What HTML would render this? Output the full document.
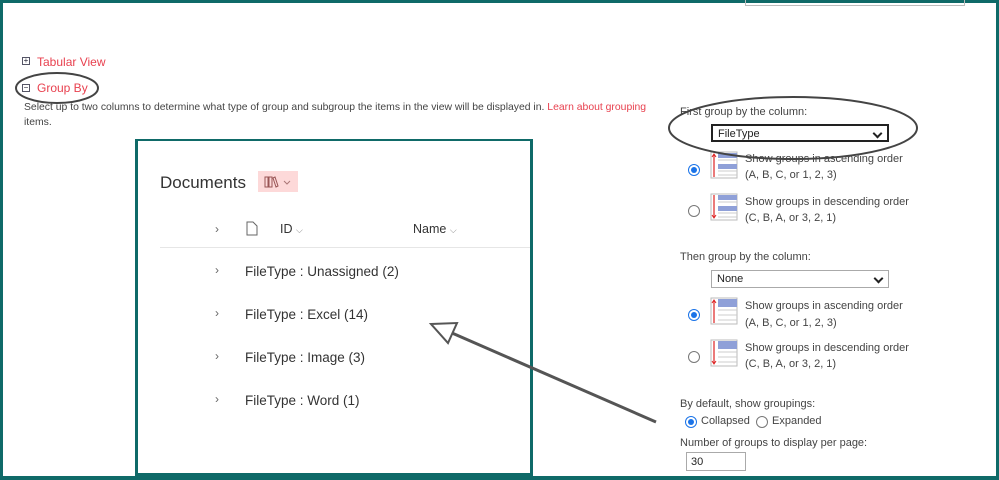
<!DOCTYPE html>
<html><head><meta charset="utf-8"><style>
*{margin:0;padding:0;box-sizing:border-box}
body{width:999px;height:480px;position:relative;overflow:hidden;background:#fff;font-family:"Liberation Sans",sans-serif;color:#444}
.a{position:absolute;white-space:nowrap}
.red{color:#e8414f}
.s{font-size:11px;color:#444}
.rad{position:absolute;width:12px;height:12px;border-radius:50%;border:1px solid #777;background:#fff}
.rad.on{border:1px solid #1a73e8}
.rad.on::after{content:"";position:absolute;left:2px;top:2px;width:6px;height:6px;border-radius:50%;background:#1a73e8}
.sel{position:absolute;height:18px;border:1px solid #aaa;font-size:11px;padding:2px 5px;color:#222}
.sel::after{content:"";position:absolute;right:6px;top:4px;width:5px;height:5px;border-right:2px solid #222;border-bottom:2px solid #222;transform:rotate(45deg)}
.g{position:absolute;left:245px;font-size:13.5px;color:#333}
.ch{position:absolute;left:215px;font-size:12px;color:#666}
</style></head><body>
<div style="position:absolute;left:0;top:0;width:999px;height:480px;border:3px solid #0f6a68;border-bottom-width:4px"></div>
<div style="position:absolute;left:745px;top:0;width:220px;height:6px;border:1px solid #bbb;border-top:none"></div>

<div class="a" style="left:22px;top:57px;width:8px;height:8px;border:1px solid #556;font-size:8px;line-height:6px;text-align:center;color:#223">+</div>
<div class="a red" style="left:37px;top:55px;font-size:12px">Tabular View</div>
<div class="a" style="left:22px;top:84px;width:8px;height:8px;border:1px solid #556;font-size:8px;line-height:6px;text-align:center;color:#223">−</div>
<div class="a red" style="left:37px;top:81px;font-size:12px">Group By</div>
<div class="a s" style="left:24px;top:102px;font-size:10.4px">Select up to two columns to determine what type of group and subgroup the items in the view will be displayed in. <span class="red">Learn about grouping</span></div>
<div class="a s red" style="left:24px;top:117px;font-size:10.4px">items.</div>

<div style="position:absolute;left:135px;top:139px;width:398px;height:337px;border:3px solid #0f6a68;border-top-width:2px"></div>
<div class="a" style="left:160px;top:173px;font-size:17px;color:#333">Documents</div>
<div style="position:absolute;left:258px;top:171px;width:40px;height:21px;background:#fdd9d9"></div>
<svg class="a" style="left:264px;top:175px" width="30" height="14"><path d="M1 2v10h3V2zM5 2v10h3V2zM9 3l3 9 2-1-3-9z" fill="none" stroke="#955" stroke-width="1"/><path d="M20 6l3 3 3-3" fill="none" stroke="#a77"/></svg>
<div class="a" style="left:215px;top:222px;font-size:12px;color:#666">›</div>
<svg class="a" style="left:246px;top:221px" width="12" height="15"><path d="M1 1h6l4 4v9H1z" fill="none" stroke="#666"/></svg>
<div class="a" style="left:280px;top:222px;font-size:12.5px;color:#333">ID <span style="font-size:9px;color:#888">⌵</span></div>
<div class="a" style="left:413px;top:222px;font-size:12.5px;color:#333">Name <span style="font-size:9px;color:#888">⌵</span></div>
<div style="position:absolute;left:160px;top:247px;width:370px;height:1px;background:#e6e6e6"></div>
<div class="ch" style="top:263px">›</div><div class="g" style="top:264px">FileType : Unassigned (2)</div>
<div class="ch" style="top:306px">›</div><div class="g" style="top:307px">FileType : Excel (14)</div>
<div class="ch" style="top:349px">›</div><div class="g" style="top:350px">FileType : Image (3)</div>
<div class="ch" style="top:392px">›</div><div class="g" style="top:393px">FileType : Word (1)</div>

<div class="a s" style="left:680px;top:106px">First group by the column:</div>
<div class="sel" style="left:711px;top:124px;width:178px;border:2px solid #222">FileType</div>
<div class="rad on" style="left:688px;top:164px"></div>
<svg class="a" style="left:710px;top:151px" width="28" height="28"><rect x="1" y="1" width="26" height="26" fill="#fff" stroke="#bbb"/><rect x="8" y="2" width="19" height="5" fill="#8fa0d8"/><rect x="8" y="13" width="19" height="5" fill="#8fa0d8"/><path d="M8 9h19M8 20h19M8 24h19" stroke="#ccc"/><path d="M4 4v22" stroke="#d22" stroke-width="1.2"/><path d="M2 6l2-3 2 3" fill="none" stroke="#d22"/></svg>
<div class="a s" style="left:745px;top:153px">Show groups in ascending order</div>
<div class="a s" style="left:745px;top:169px">(A, B, C, or 1, 2, 3)</div>
<div class="rad" style="left:688px;top:205px"></div>
<svg class="a" style="left:710px;top:193px" width="28" height="28"><rect x="1" y="1" width="26" height="26" fill="#fff" stroke="#bbb"/><rect x="8" y="2" width="19" height="5" fill="#8fa0d8"/><rect x="8" y="13" width="19" height="5" fill="#8fa0d8"/><path d="M8 9h19M8 20h19M8 24h19" stroke="#ccc"/><path d="M4 2v22" stroke="#d22" stroke-width="1.2"/><path d="M2 22l2 3 2-3" fill="none" stroke="#d22"/></svg>
<div class="a s" style="left:745px;top:196px">Show groups in descending order</div>
<div class="a s" style="left:745px;top:212px">(C, B, A, or 3, 2, 1)</div>

<div class="a s" style="left:680px;top:251px">Then group by the column:</div>
<div class="sel" style="left:711px;top:270px;width:178px">None</div>
<div class="rad on" style="left:688px;top:309px"></div>
<svg class="a" style="left:710px;top:297px" width="28" height="28"><rect x="1" y="1" width="26" height="26" fill="#fff" stroke="#bbb"/><rect x="8" y="2" width="19" height="5" fill="#8fa0d8"/><rect x="8" y="5" width="19" height="5" fill="#8fa0d8"/><path d="M8 13h19M8 18h19M8 23h19" stroke="#ccc"/><path d="M4 4v22" stroke="#d22" stroke-width="1.2"/><path d="M2 6l2-3 2 3" fill="none" stroke="#d22"/></svg>
<div class="a s" style="left:745px;top:300px">Show groups in ascending order</div>
<div class="a s" style="left:745px;top:317px">(A, B, C, or 1, 2, 3)</div>
<div class="rad" style="left:688px;top:351px"></div>
<svg class="a" style="left:710px;top:339px" width="28" height="28"><rect x="1" y="1" width="26" height="26" fill="#fff" stroke="#bbb"/><rect x="8" y="2" width="19" height="5" fill="#8fa0d8"/><rect x="8" y="5" width="19" height="5" fill="#8fa0d8"/><path d="M8 13h19M8 18h19M8 23h19" stroke="#ccc"/><path d="M4 2v22" stroke="#d22" stroke-width="1.2"/><path d="M2 22l2 3 2-3" fill="none" stroke="#d22"/></svg>
<div class="a s" style="left:745px;top:342px">Show groups in descending order</div>
<div class="a s" style="left:745px;top:358px">(C, B, A, or 3, 2, 1)</div>

<div class="a s" style="left:680px;top:398px">By default, show groupings:</div>
<div class="rad on" style="left:685px;top:416px"></div>
<div class="a s" style="left:701px;top:415px">Collapsed</div>
<div class="rad" style="left:756px;top:416px"></div>
<div class="a s" style="left:772px;top:415px">Expanded</div>
<div class="a s" style="left:680px;top:437px">Number of groups to display per page:</div>
<div style="position:absolute;left:686px;top:452px;width:60px;height:19px;border:1px solid #aaa;font-size:11px;padding:3px 4px;color:#222">30</div>

<svg class="a" style="left:0;top:0" width="999" height="480">
<ellipse cx="57" cy="88" rx="41" ry="15" fill="none" stroke="#444" stroke-width="2"/>
<ellipse cx="793" cy="128" rx="124" ry="31" fill="none" stroke="#444" stroke-width="2"/>
<path d="M656 422L452 333" stroke="#555" stroke-width="3"/>
<path d="M431 324L457 323L448 343Z" fill="#fff" stroke="#555" stroke-width="2"/>
</svg>
</body></html>
